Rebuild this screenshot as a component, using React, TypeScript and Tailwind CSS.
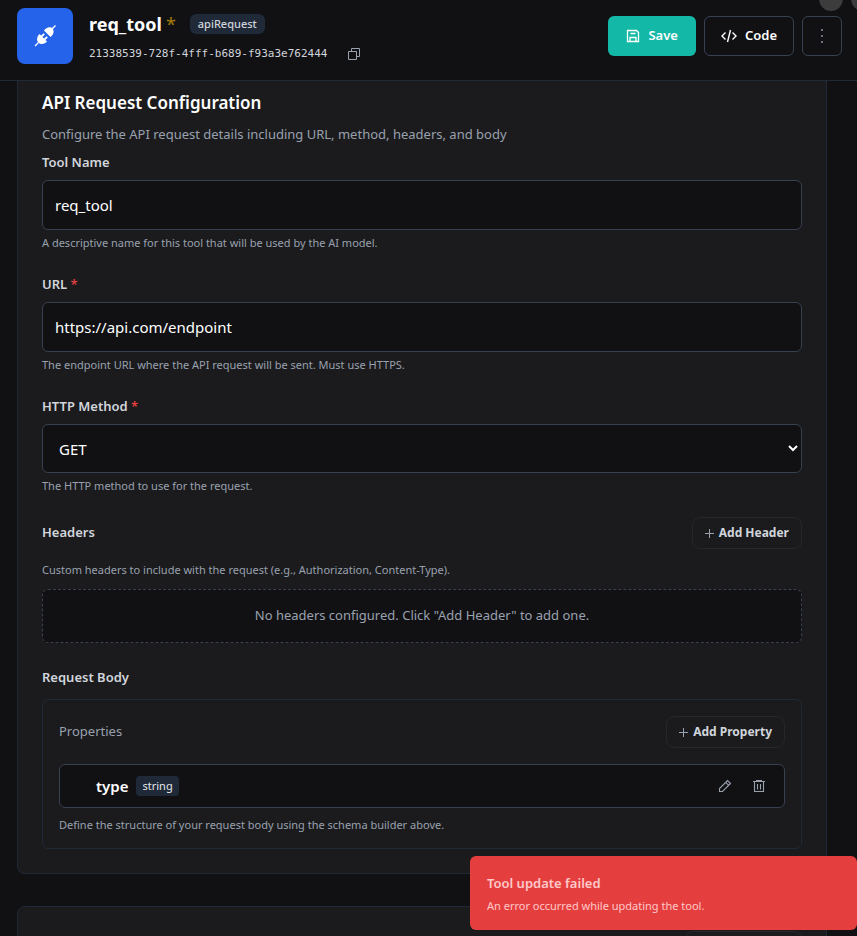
import React, { useState } from 'react'

interface FieldProps {
    id: string,
    label: string,
    hint: string,
    required?: boolean,
    children: React.ReactNode,
}

function PlugIcon() {
    return (
        <svg viewBox="0 0 24 24" className="size-6" fill="currentColor" stroke="currentColor" strokeWidth="1.4">
            <path d="M2 22l3.5-3.5M22.5 1.5L19 5" fill="none" />
            <path d="M6.5 10l7.500 7.500c-2 2.6-6.100 3.300-8.500 1.200s-1.500-6.200 1-8.700z" stroke="none" />
            <path d="M11 6.500l6.500 6.500c2.6-2 4.300-5.400 2.100-8.200S13 3.700 11 6.500z" stroke="none" />
            <path d="M8.5 12.5l2.7-2.7M11.5 15.5l2.7-2.7" strokeWidth="1.8" />
        </svg>
    )
}

function CopyIcon() {
    return (
        <svg viewBox="0 0 14 14" className="size-3.5" fill="none" stroke="currentColor">
            <path d="M1.5 4.500h8v8h-8zM4.5 4.5v-3h8v8h-3" />
        </svg>
    )
}

function SaveIcon() {
    return (
        <svg viewBox="0 0 14 14" className="size-3.5" fill="none" stroke="currentColor" strokeWidth="1.3">
            <path d="M1.5 1.5h9l2 2v9h-11z" />
            <path d="M4.5 4.5h5M4 12.5v-4h6v4" />
        </svg>
    )
}

function CodeIcon() {
    return (
        <svg viewBox="0 0 16 14" className="h-3.5 w-4" fill="none" stroke="currentColor" strokeWidth="1.4">
            <path d="M4.5 3.5L1 7l3.5 3.5M11.5 3.5L15 7l-3.5 3.5M9.5 1l-3 12" />
        </svg>
    )
}

function PlusIcon() {
    return (
        <svg viewBox="0 0 9 9" className="size-[9px]" stroke="currentColor">
            <path d="M4.5 0v9M0 4.5h9" />
        </svg>
    )
}

function PencilIcon() {
    return (
        <svg viewBox="0 0 14 14" className="size-3.5" fill="none" stroke="currentColor" strokeWidth="1.1">
            <path d="M1.5 12.5V9.5l8-8 3 3-8 8zM7.7 3.3l3 3" />
        </svg>
    )
}

function TrashIcon() {
    return (
        <svg viewBox="0 0 14 14" className="size-3.5" fill="none" stroke="currentColor" strokeWidth="1.1">
            <path d="M1 2.5h12M4 1.5h6M2.5 3v9.5h9V3" />
            <path d="M5.5 5v5.5M8.5 5v5.5" />
        </svg>
    )
}

function Field({ id, label, hint, required, children }: FieldProps) {
    return (
        <div>
            <label htmlFor={id} className="block h-5 text-[13px] leading-5 font-semibold text-gray-300">
                {label}{required && <span className="text-[#e53e3e]"> *</span>}
            </label>
            <div className="mt-2">{children}</div>
            <p className="mt-1 text-[11px] leading-[18px] text-gray-400">{hint}</p>
        </div>
    )
}

function AddButton({ text }: { text: string }) {
    return (
        <button className="flex h-8 items-center gap-[5px] rounded-lg border border-[#27272a] px-3 text-[12px] font-bold text-gray-300">
            <span className="text-gray-400"><PlusIcon /></span>
            {text}
        </button>
    )
}

export default function App() {
    const [name, setName] = useState('req_tool')
    const [url, setUrl] = useState('https://api.com/endpoint')
    const [method, setMethod] = useState('GET')

    return (
        <div className="flex h-screen flex-col overflow-hidden bg-[#111113] font-['Noto_Sans','Open_Sans',sans-serif] text-white">
            <header className="relative flex h-[81px] shrink-0 items-start justify-between border-b border-[#1f2937] pt-2 pr-[15px] pl-[17px]">
                <div className="flex gap-4">
                    <div className="flex size-14 items-center justify-center rounded-lg bg-[#2563eb]">
                        <PlugIcon />
                    </div>
                    <div>
                        <div className="flex h-8 items-center">
                            <h1 className="text-[18px] font-bold">req_tool</h1>
                            <span className="ml-1 text-[18px] text-[#a17c0b]">*</span>
                            <span className="ml-3.5 flex h-5 items-center rounded-md bg-[#1f2937] px-2 text-[11px] font-medium text-gray-300">apiRequest</span>
                        </div>
                        <div className="flex h-7 items-center gap-5">
                            <code className="font-['DejaVu_Sans_Mono',monospace] text-[11px] text-gray-300">21338539-728f-4fff-b689-f93a3e762444</code>
                            <button aria-label="Copy id" className="text-gray-400"><CopyIcon /></button>
                        </div>
                    </div>
                </div>
                <div className="flex gap-2 pt-2">
                    <button className="flex h-10 items-center gap-2 rounded-md bg-[#14b8a6] px-[18px] text-[13px] font-semibold">
                        <SaveIcon />Save
                    </button>
                    <button className="flex h-10 items-center gap-2 rounded-md border border-[#374151] px-4 text-[13px] font-semibold">
                        <CodeIcon />Code
                    </button>
                    <button aria-label="More" className="flex h-10 w-10 items-center justify-center rounded-md border border-[#374151] text-gray-500">
                        <svg viewBox="0 0 2 14" className="h-3.5 w-0.5" fill="currentColor">
                            <path d="M0 0h2v2H0zM0 6h2v2H0zM0 12h2v2H0z" />
                        </svg>
                    </button>
                </div>
                <div className="absolute -top-[13px] right-3.5 size-6 rounded-full bg-[#3c3c3d]" />
                <div className="absolute -top-[13px] -right-[18px] size-6 rounded-full bg-[#3c3c3d]" />
            </header>

            <main className="flex-1 overflow-hidden pr-[30px] pl-[17px]">
                <section className="rounded-b-lg border border-t-0 border-[#1f2937] bg-[#1b1b1d] px-6 pt-2 pb-6">
                    <h2 className="text-[17px] leading-7 font-semibold">API Request Configuration</h2>
                    <p className="mt-[7px] text-[13px] leading-5 text-gray-400">Configure the API request details including URL, method, headers, and body</p>

                    <div className="mt-2 flex flex-col gap-[22px]">
                        <Field id="name" label="Tool Name" hint="A descriptive name for this tool that will be used by the AI model.">
                            <input id="name" value={name} onChange={(e) => setName(e.target.value)} className="h-[50px] w-full rounded-md border border-[#374151] bg-[#111113] px-3 text-[15px] outline-none" />
                        </Field>
                        <Field id="url" label="URL" required hint="The endpoint URL where the API request will be sent. Must use HTTPS.">
                            <input id="url" value={url} onChange={(e) => setUrl(e.target.value)} className="h-[50px] w-full rounded-md border border-[#374151] bg-[#111113] px-3 text-[15px] outline-none" />
                        </Field>
                        <Field id="method" label="HTTP Method" required hint="The HTTP method to use for the request.">
                            <select id="method" value={method} onChange={(e) => setMethod(e.target.value)} className="h-[49px] w-full rounded-md border border-[#374151] bg-[#111113] px-3 text-[15px] outline-none">
                                <option>GET</option>
                                <option>POST</option>
                            </select>
                        </Field>
                    </div>

                    <div className="mt-[22px] flex items-center justify-between">
                        <h3 className="text-[13px] font-semibold text-gray-300">Headers</h3>
                        <AddButton text="Add Header" />
                    </div>
                    <p className="mt-3 text-[11px] leading-[18px] text-gray-400">Custom headers to include with the request (e.g., Authorization, Content-Type).</p>
                    <div className="mt-2.5 flex h-[54px] items-center justify-center rounded-md border border-dashed border-[#374151] bg-[#111113] text-[13px] text-gray-400">
                        No headers configured. Click "Add Header" to add one.
                    </div>

                    <h3 className="mt-6 text-[13px] leading-5 font-semibold text-gray-300">Request Body</h3>
                    <div className="mt-3 rounded-md border border-[#1f2937] px-4 pt-4 pb-3.5">
                        <div className="flex items-center justify-between">
                            <span className="text-[13px] text-gray-400">Properties</span>
                            <AddButton text="Add Property" />
                        </div>
                        <div className="mt-4 flex h-11 items-center justify-between rounded-md border border-[#374151] bg-[#111113] pr-[18px] pl-9">
                            <div className="flex items-center gap-2">
                                <span className="text-[15px] font-semibold">type</span>
                                <span className="flex h-5 items-center rounded-sm bg-[#1f2937] px-1.5 text-[11px] text-gray-200">string</span>
                            </div>
                            <div className="flex gap-5 text-gray-400">
                                <button aria-label="Edit type"><PencilIcon /></button>
                                <button aria-label="Delete type"><TrashIcon /></button>
                            </div>
                        </div>
                        <p className="mt-2 text-[11px] leading-[18px] text-gray-400">Define the structure of your request body using the schema builder above.</p>
                    </div>
                </section>
                <section className="mt-8 h-40 rounded-lg border border-[#1f2937] bg-[#1b1b1d] px-6 pt-6">
                    <div className="flex justify-end">
                        <button aria-label="Add" className="h-8 w-[117px] rounded-lg border border-[#27272a]" />
                    </div>
                </section>
            </main>

            <div role="alert" className="fixed right-0 bottom-1.5 flex h-[74px] w-[387px] flex-col rounded-md bg-[#e53e3e] px-[17px] pt-[17px]">
                <p className="text-[13px] leading-5 font-semibold text-red-200">Tool update failed</p>
                <p className="mt-[3px] text-[11px] leading-5 text-red-200">An error occurred while updating the tool.</p>
            </div>
        </div>
    )
}
